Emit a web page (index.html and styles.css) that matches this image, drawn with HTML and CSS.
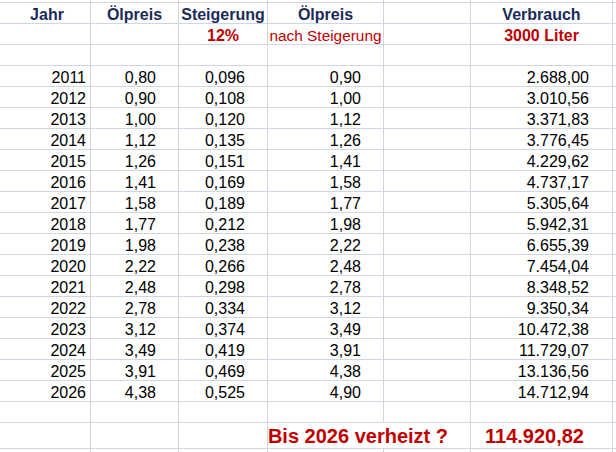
FILE: index.html
```html
<!DOCTYPE html>
<html lang="de">
<head>
<meta charset="utf-8">
<title>Ölpreis</title>
<link rel="stylesheet" href="styles.css">
</head>
<body>
<div class="sheet">
  <div class="c"></div><div class="c"></div><div class="c"></div><div class="c"></div><div class="c"></div><div class="c"></div><div class="c"></div>

  <div class="c h ha">Jahr</div><div class="c h">Ölpreis</div><div class="c h">Steigerung</div><div class="c h">Ölpreis</div><div class="c"></div><div class="c h">Verbrauch</div><div class="c"></div>

  <div class="c"></div><div class="c"></div><div class="c red b ctr">12%</div><div class="c red ctr sm">nach Steigerung</div><div class="c"></div><div class="c red b ctr">3000 Liter</div><div class="c"></div>

  <div class="c"></div><div class="c"></div><div class="c"></div><div class="c"></div><div class="c"></div><div class="c"></div><div class="c"></div>

  <div class="c ra">2011</div><div class="c r">0,80</div><div class="c r">0,096</div><div class="c r">0,90</div><div class="c"></div><div class="c rf">2.688,00</div><div class="c"></div>
  <div class="c ra">2012</div><div class="c r">0,90</div><div class="c r">0,108</div><div class="c r">1,00</div><div class="c"></div><div class="c rf">3.010,56</div><div class="c"></div>
  <div class="c ra">2013</div><div class="c r">1,00</div><div class="c r">0,120</div><div class="c r">1,12</div><div class="c"></div><div class="c rf">3.371,83</div><div class="c"></div>
  <div class="c ra">2014</div><div class="c r">1,12</div><div class="c r">0,135</div><div class="c r">1,26</div><div class="c"></div><div class="c rf">3.776,45</div><div class="c"></div>
  <div class="c ra">2015</div><div class="c r">1,26</div><div class="c r">0,151</div><div class="c r">1,41</div><div class="c"></div><div class="c rf">4.229,62</div><div class="c"></div>
  <div class="c ra">2016</div><div class="c r">1,41</div><div class="c r">0,169</div><div class="c r">1,58</div><div class="c"></div><div class="c rf">4.737,17</div><div class="c"></div>
  <div class="c ra">2017</div><div class="c r">1,58</div><div class="c r">0,189</div><div class="c r">1,77</div><div class="c"></div><div class="c rf">5.305,64</div><div class="c"></div>
  <div class="c ra">2018</div><div class="c r">1,77</div><div class="c r">0,212</div><div class="c r">1,98</div><div class="c"></div><div class="c rf">5.942,31</div><div class="c"></div>
  <div class="c ra">2019</div><div class="c r">1,98</div><div class="c r">0,238</div><div class="c r">2,22</div><div class="c"></div><div class="c rf">6.655,39</div><div class="c"></div>
  <div class="c ra">2020</div><div class="c r">2,22</div><div class="c r">0,266</div><div class="c r">2,48</div><div class="c"></div><div class="c rf">7.454,04</div><div class="c"></div>
  <div class="c ra">2021</div><div class="c r">2,48</div><div class="c r">0,298</div><div class="c r">2,78</div><div class="c"></div><div class="c rf">8.348,52</div><div class="c"></div>
  <div class="c ra">2022</div><div class="c r">2,78</div><div class="c r">0,334</div><div class="c r">3,12</div><div class="c"></div><div class="c rf">9.350,34</div><div class="c"></div>
  <div class="c ra">2023</div><div class="c r">3,12</div><div class="c r">0,374</div><div class="c r">3,49</div><div class="c"></div><div class="c rf">10.472,38</div><div class="c"></div>
  <div class="c ra">2024</div><div class="c r">3,49</div><div class="c r">0,419</div><div class="c r">3,91</div><div class="c"></div><div class="c rf">11.729,07</div><div class="c"></div>
  <div class="c ra">2025</div><div class="c r">3,91</div><div class="c r">0,469</div><div class="c r">4,38</div><div class="c"></div><div class="c rf">13.136,56</div><div class="c"></div>
  <div class="c ra">2026</div><div class="c r">4,38</div><div class="c r">0,525</div><div class="c r">4,90</div><div class="c"></div><div class="c rf">14.712,94</div><div class="c"></div>

  <div class="c"></div><div class="c"></div><div class="c"></div><div class="c"></div><div class="c"></div><div class="c"></div><div class="c"></div>

  <div class="c"></div><div class="c"></div><div class="c"></div><div class="c big red b span2">Bis 2026 verheizt ?</div><div class="c big red b rt">114.920,82</div><div class="c"></div>

  <div class="c"></div><div class="c"></div><div class="c"></div><div class="c"></div><div class="c"></div><div class="c"></div><div class="c"></div>
</div>
</body>
</html>
```

FILE: styles.css
```css
html, body {
  margin: 0;
  padding: 0;
  background: #ffffff;
}

.sheet {
  width: 616px;
  height: 452px;
  overflow: hidden;
  display: grid;
  grid-template-columns: 90px 87px 88px 115px 86px 141px 1fr;
  grid-template-rows: 2px repeat(19, 20px) 20px 25px 1fr;
  gap: 1px;
  background: #cfd5e1;
  font-family: "Liberation Sans", Arial, sans-serif;
  font-size: 16px;
  color: #000000;
}

.c {
  background: #ffffff;
  display: flex;
  align-items: flex-end;
  line-height: 17px;
  white-space: nowrap;
  min-width: 0;
}

.h {
  font-weight: bold;
  color: #1b2b58;
  justify-content: center;
}

.ha {
  padding-left: 4px;
}

.ctr {
  justify-content: center;
}

.b {
  font-weight: bold;
}

.red {
  color: #c00000;
}

.sm {
  font-size: 15.4px;
}

.ra {
  justify-content: flex-end;
  padding-right: 4px;
}

.r {
  justify-content: flex-end;
  padding-right: 22px;
}

.rf {
  justify-content: flex-end;
  padding-right: 23px;
}

.big {
  font-size: 20px;
  line-height: 20px;
  padding-bottom: 2px;
}

.span2 {
  grid-column: span 2;
  justify-content: flex-end;
  padding-right: 22px;
}

.rt {
  justify-content: flex-end;
  padding-right: 28px;
}
```
